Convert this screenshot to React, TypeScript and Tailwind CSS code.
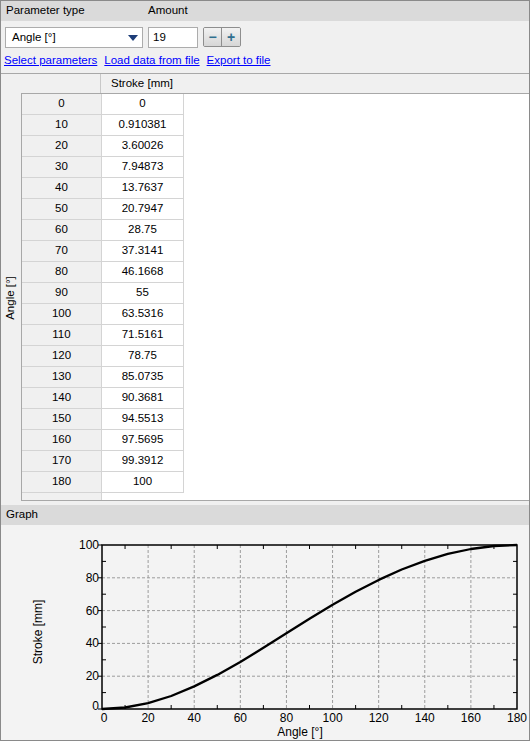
import React from "react"

const rows: [number, string][] = [
    [0, "0"],
    [10, "0.910381"],
    [20, "3.60026"],
    [30, "7.94873"],
    [40, "13.7637"],
    [50, "20.7947"],
    [60, "28.75"],
    [70, "37.3141"],
    [80, "46.1668"],
    [90, "55"],
    [100, "63.5316"],
    [110, "71.5161"],
    [120, "78.75"],
    [130, "85.0735"],
    [140, "90.3681"],
    [150, "94.5513"],
    [160, "97.5695"],
    [170, "99.3912"],
    [180, "100"],
]

// plot box in page coordinates
const L = 102
const R = 517
const T = 545
const B = 709
const px = (a: number) => L + (a / 180) * (R - L)
const py = (v: number) => B - (v / 100) * (B - T)

function Graph() {
    const curve = rows.map(([a, v]) => `${px(a).toFixed(1)},${py(parseFloat(v)).toFixed(1)}`).join(" ")
    const xs = [0, 20, 40, 60, 80, 100, 120, 140, 160, 180]
    const ys = [0, 20, 40, 60, 80, 100]
    return (
        <svg width="528" height="215" viewBox="1 525 528 215" className="block">
            {/* grid */}
            {xs.slice(1, -1).map((a) => (
                <line key={"gx" + a} x1={px(a)} x2={px(a)} y1={T} y2={B} stroke="#9c9c9c" strokeDasharray="3 2" />
            ))}
            {ys.slice(1, -1).map((v) => (
                <line key={"gy" + v} x1={L} x2={R} y1={py(v)} y2={py(v)} stroke="#9c9c9c" strokeDasharray="3 2" />
            ))}
            {/* minor ticks */}
            {[10, 30, 50, 70, 90, 110, 130, 150, 170].map((a) => (
                <g key={"tx" + a}>
                    <line x1={px(a)} x2={px(a)} y1={T} y2={T + 4} stroke="#000" />
                    <line x1={px(a)} x2={px(a)} y1={B} y2={B - 4} stroke="#000" />
                </g>
            ))}
            {[10, 30, 50, 70, 90].map((v) => (
                <g key={"ty" + v}>
                    <line x1={L} x2={L + 4} y1={py(v)} y2={py(v)} stroke="#000" />
                    <line x1={R} x2={R - 4} y1={py(v)} y2={py(v)} stroke="#000" />
                </g>
            ))}
            {ys.map((v) => (
                <line key={"my" + v} x1={L - 4} x2={L} y1={py(v)} y2={py(v)} stroke="#000" />
            ))}
            {/* frame */}
            <rect x={L} y={T} width={R - L} height={B - T} fill="none" stroke="#000" strokeWidth="1.5" />
            <polyline points={curve} fill="none" stroke="#000" strokeWidth="2.3" strokeLinejoin="round" />
            {/* labels */}
            <g fontFamily="'Liberation Sans', Arial, sans-serif" fontSize="12" fill="#000">
                {ys.map((v) => (
                    <text key={"ly" + v} x={L - 3} y={py(v) + (v === 0 ? 1 : 4)} textAnchor="end">
                        {v}
                    </text>
                ))}
                {xs.map((a) => (
                    <text key={"lx" + a} x={a === 0 ? px(a) + 2 : px(a)} y={B + 13} textAnchor="middle">
                        {a}
                    </text>
                ))}
                <text x="300" y="736" textAnchor="middle">
                    Angle [°]
                </text>
                <text x="42" y="632" textAnchor="middle" transform="rotate(-90 42 632)">
                    Stroke [mm]
                </text>
            </g>
        </svg>
    )
}

export default function App() {
    return (
        <div
            className="w-[530px] h-[741px] border border-[#8a8a8a] bg-[#f0f0f0] flex flex-col text-[11.5px] text-black overflow-hidden"
            style={{ fontFamily: "'Liberation Sans', Arial, sans-serif" }}
        >
            {/* parameter header */}
            <div className="h-[20px] bg-[#dadada] flex items-center shrink-0">
                <span className="ml-[5px] w-[142px]">Parameter type</span>
                <span>Amount</span>
            </div>

            {/* controls */}
            <div className="flex items-start pt-[6px] h-[27px] shrink-0">
                <div className="ml-[4px] w-[138px] h-[21px] bg-white border border-[#acacac] flex items-center justify-between pl-[6px] pr-[4px]">
                    <span>Angle [°]</span>
                    <svg width="10" height="6" viewBox="0 0 10 6">
                        <path d="M0 0h10L5 6z" fill="#1d3d78" />
                    </svg>
                </div>
                <div className="ml-[5px] w-[50px] h-[21px] bg-white border border-[#acacac] flex items-center pl-[4px]">19</div>
                <div className="ml-[5px] flex h-[20px] border border-[#8e8e8e] rounded-[2px] overflow-hidden">
                    <div className="w-[18px] flex items-center justify-center bg-gradient-to-b from-[#f2f2f2] to-[#d6d6d6] border-r border-[#8e8e8e] text-[#2f6f8f] font-bold text-[14px] leading-none">
                        −
                    </div>
                    <div className="w-[18px] flex items-center justify-center bg-gradient-to-b from-[#f2f2f2] to-[#d6d6d6] text-[#2f6f8f] font-bold text-[14px] leading-none">
                        +
                    </div>
                </div>
            </div>

            {/* links */}
            <div className="h-[25px] flex items-center gap-[7px] pl-[3px] shrink-0 text-[#0000ff]">
                <span className="underline">Select parameters</span>
                <span className="underline">Load data from file</span>
                <span className="underline">Export to file</span>
            </div>

            {/* table */}
            <div className="border-t border-[#a8a8a8] shrink-0">
                <div className="flex h-[20px]">
                    <div className="w-[20px]" />
                    <div className="flex-1 flex border-b border-[#a8a8a8]">
                        <div className="w-[80px] border-r border-[#c8c8c8]" />
                        <div className="w-[82px] flex items-center justify-center">Stroke [mm]</div>
                    </div>
                </div>
                <div className="flex">
                    <div className="w-[20px] relative">
                        <span className="absolute left-1/2 top-1/2 -translate-x-1/2 -translate-y-1/2 -rotate-90 whitespace-nowrap">
                            Angle [°]
                        </span>
                    </div>
                    <div className="flex-1 border-l border-b border-[#a8a8a8] bg-white">
                        {rows.map(([a, v]) => (
                            <div key={a} className="flex h-[21px]">
                                <div className="w-[80px] bg-[#f0f0f0] border-r border-b border-[#d4d4d4] flex items-center justify-center">
                                    {a}
                                </div>
                                <div className="w-[82px] border-r border-b border-[#d4d4d4] flex items-center justify-center">
                                    {v}
                                </div>
                            </div>
                        ))}
                        <div className="flex h-[7px]">
                            <div className="w-[80px] bg-[#f0f0f0] border-r border-[#d4d4d4]" />
                        </div>
                    </div>
                </div>
            </div>

            {/* graph */}
            <div className="mt-[4px] h-[20px] bg-[#dadada] flex items-center shrink-0">
                <span className="ml-[5px]">Graph</span>
            </div>
            <div className="flex-1 bg-[#f3f3f3]">
                <Graph />
            </div>
        </div>
    )
}
